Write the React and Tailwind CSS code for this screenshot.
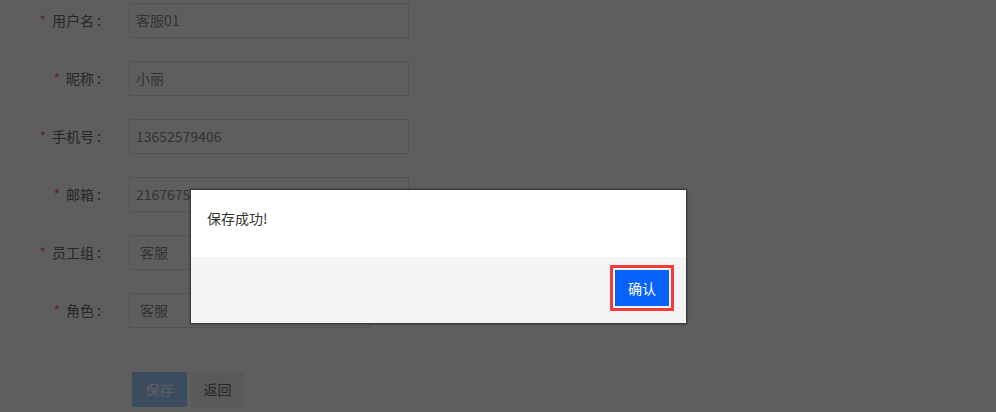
import React from "react";

const font = { fontFamily: '"Microsoft YaHei", "Noto Sans CJK SC", "Noto Sans", sans-serif' };

function Row({ label, value, narrow, select }) {
  return (
    <div className="flex items-center h-[35px] mb-[23px]">
      <div className="w-[101px] text-right text-[14px] text-[#6a6a6a] whitespace-nowrap">
        <span className="text-[#e66] mr-[6px]">*</span>
        {label}
        <span className="ml-[3px]">:</span>
      </div>
      <div
        className={`ml-[28px] h-[35px] border border-[#e2e2e2] flex items-center text-[14px] text-[#8a8a8a] ${
          narrow ? "w-[241px]" : "w-[280px]"
        } ${select ? "pl-[10px]" : "pl-[6px]"}`}
      >
        {value}
      </div>
    </div>
  );
}

export default function App() {
  return (
    <div className="relative w-[996px] h-[412px] bg-white overflow-hidden" style={font}>
      <div className="pt-[3px]">
        <Row label="用户名" value="客服01" />
        <Row label="昵称" value="小丽" />
        <Row label="手机号" value="13652579406" />
        <Row label="邮箱" value="2167675@qq.com" />
        <Row label="员工组" value="客服" narrow select />
        <Row label="角色" value="客服" narrow select />
        <div className="flex ml-[132px] mt-[44px] gap-[4px]">
          <button className="w-[55px] h-[35px] bg-[#a0cfff] text-white text-[14px]">保存</button>
          <button className="w-[53px] h-[35px] bg-[#f0f0f0] text-[#6a6a6a] text-[14px]">返回</button>
        </div>
      </div>

      <div className="absolute inset-0 bg-[rgba(0,0,0,0.63)]" />

      <div className="absolute left-[191px] top-[190px] w-[495px] bg-white shadow-[0_0_2px_1px_rgba(0,0,0,0.55)]">
        <div className="h-[67px] pl-[16px] pt-[18px] text-[14px] leading-[20px] text-[#333]">保存成功!</div>
        <div className="h-[66px] bg-[#f4f4f4] flex justify-end items-start pt-[13px] pr-[17px]">
          <button className="w-[54px] h-[36px] bg-[#0663f9] text-white text-[14px] outline-[3px] outline-solid outline-[#f23c3c] outline-offset-[2px]">
            确认
          </button>
        </div>
      </div>
    </div>
  );
}
